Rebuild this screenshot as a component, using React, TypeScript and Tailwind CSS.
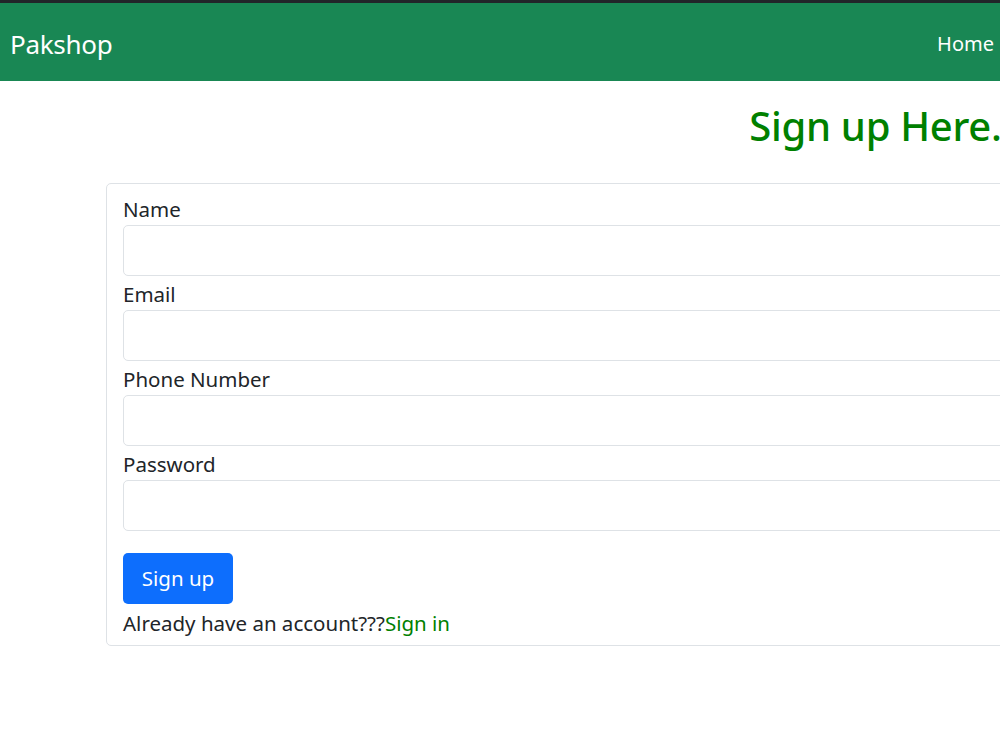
import React from "react";

export default function App() {
  const fields = ["Name", "Email", "Phone Number", "Password"];
  return (
    <div
      className="w-[1000px] h-[750px] overflow-hidden bg-white text-[#212529]"
      style={{ fontFamily: '"Noto Sans", "Open Sans", sans-serif' }}
    >
      <div className="border-t-[3px] border-[#212529]">
        <nav className="h-[78px] bg-[#198754] flex items-center justify-between pl-[10px] pr-[6px] pt-[4px]">
          <span className="text-[26px] text-white tracking-[-0.3px]">Pakshop</span>
          <span className="text-[20px] text-white">Home</span>
        </nav>
      </div>
      <div className="w-[1772px]">
        <h2 className="text-center text-[40px] font-medium text-[#008000] leading-[48px] mt-[21px] mb-[33px] tracking-[-0.3px]">
          Sign up Here...
        </h2>
        <div className="mx-[106px] border border-[#dee2e6] rounded-[5px] px-[16px] pt-[16px] pb-[7px]">
          <div className="flex flex-col gap-[9px]">
            {fields.map((f) => (
              <div key={f} className="flex flex-col">
                <label className="text-[20.5px] leading-[19px] h-[25px]">{f}</label>
                <div className="h-[51px] border border-[#dee2e6] rounded-[5px] bg-white" />
              </div>
            ))}
          </div>
          <button className="mt-[22px] h-[51px] w-[110px] rounded-[5px] bg-[#0d6efd] text-white text-[20.5px]">
            Sign up
          </button>
          <div className="text-[20.5px] leading-[30px] mt-[4px]">
            Already have an account???<span className="text-[#008000]">Sign in</span>
          </div>
        </div>
      </div>
    </div>
  );
}
